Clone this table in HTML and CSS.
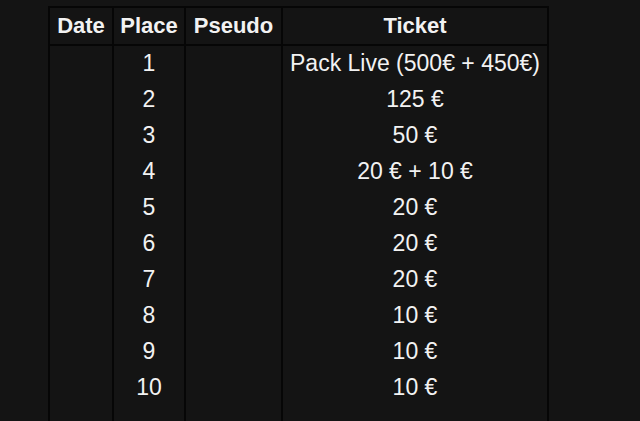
FILE: index.html
```html
<!DOCTYPE html>
<html>
<head>
<meta charset="utf-8">
<link rel="stylesheet" href="styles.css">
</head>
<body>
<table class="prizes">
  <thead>
    <tr><th class="c-date">Date</th><th class="c-place">Place</th><th class="c-pseudo">Pseudo</th><th class="c-ticket">Ticket</th></tr>
  </thead>
  <tbody>
    <tr><td></td><td>1</td><td></td><td>Pack Live (500€ + 450€)</td></tr>
    <tr><td></td><td>2</td><td></td><td>125 €</td></tr>
    <tr><td></td><td>3</td><td></td><td>50 €</td></tr>
    <tr><td></td><td>4</td><td></td><td>20 € + 10 €</td></tr>
    <tr><td></td><td>5</td><td></td><td>20 €</td></tr>
    <tr><td></td><td>6</td><td></td><td>20 €</td></tr>
    <tr><td></td><td>7</td><td></td><td>20 €</td></tr>
    <tr><td></td><td>8</td><td></td><td>10 €</td></tr>
    <tr><td></td><td>9</td><td></td><td>10 €</td></tr>
    <tr><td></td><td>10</td><td></td><td>10 €</td></tr>
    <tr><td></td><td></td><td></td><td></td></tr>
  </tbody>
</table>
</body>
</html>
```
FILE: styles.css
```css
html, body {
  margin: 0;
  padding: 0;
  background: #141414;
  overflow: hidden;
  height: 100%;
}
body {
  padding: 6px 0 0 48px;
  box-sizing: border-box;
  font-family: "Liberation Sans", Arial, sans-serif;
  color: #f2f2f2;
}
.prizes {
  border-collapse: collapse;
  table-layout: fixed;
  width: 500px;
}
.prizes th, .prizes td {
  border-left: 2px solid #060606;
  border-right: 2px solid #060606;
  padding: 0;
  text-align: center;
  height: 36px;
  white-space: nowrap;
}
.prizes th {
  font-weight: bold;
  font-size: 22px;
  border-top: 2px solid #060606;
  border-bottom: 2px solid #060606;
}
.prizes td {
  font-size: 23px;
  height: 34px;
  padding-bottom: 2px;
}
.c-date { width: 62px; }
.c-place { width: 70px; }
.c-pseudo { width: 95px; }
.c-ticket { width: 264px; }
```
